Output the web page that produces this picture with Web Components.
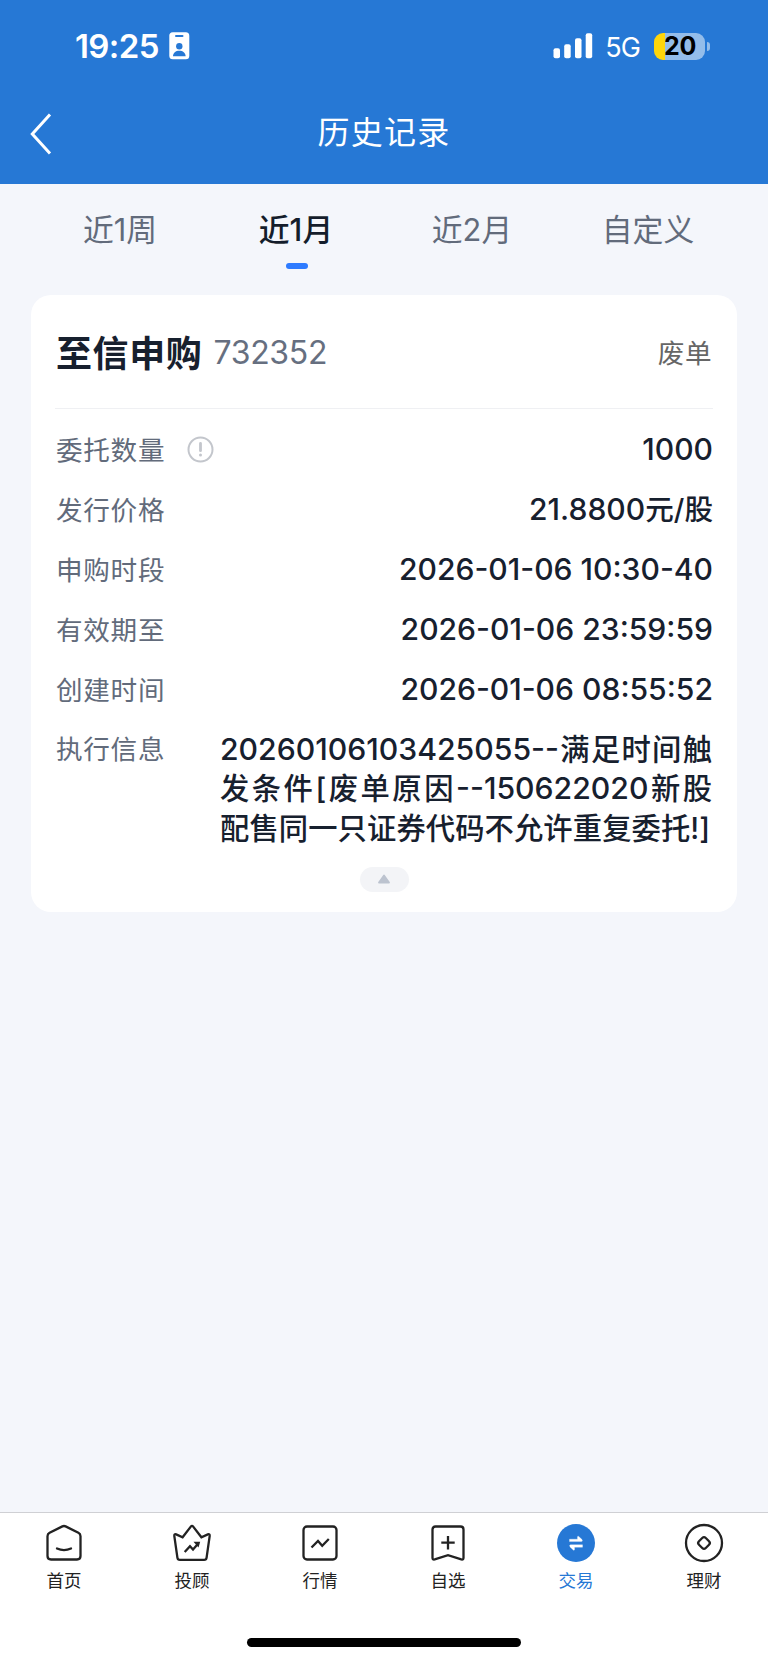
<!DOCTYPE html>
<html lang="zh-CN">
<head>
<meta charset="utf-8">
<meta name="viewport" content="width=device-width, initial-scale=1">
<title>历史记录</title>
<style>
  body {
    margin: 0;
    background: #f4f6fb;
    font-family: Inter, "Noto Sans CJK SC", sans-serif;
  }
</style>
</head>
<body>
<history-page></history-page>

<script>
function attach(el, markup) {
  const template = document.createElement('template');
  template.innerHTML = markup;
  el.attachShadow({mode: 'open'}).appendChild(template.content.cloneNode(true));
}

class StatusBar extends HTMLElement {
  constructor() {
    super();
    attach(this, `
      <style>
        :host {
          display: flex;
          align-items: center;
          height: 92px;
          box-sizing: border-box;
          padding: 0 58px 0 75px;
          color: #fff;
        }
        .time { font-size: 33px; font-weight: 600; letter-spacing: -0.6px; }
        .badge { margin-left: 10px; }
        .signal { margin-left: auto; }
        .network { margin: 2px 0 0 12px; font-size: 27px; letter-spacing: -0.9px; }
        .battery {
          display: flex;
          align-items: center;
          justify-content: center;
          box-sizing: border-box;
          width: 51px;
          height: 27px;
          margin-left: 14px;
          padding-left: 1px;
          border-radius: 9px;
          background: linear-gradient(90deg, #ffd60a 10.5px, #94bdea 10.5px);
          color: #000;
          font-size: 25px;
          font-weight: 700;
          letter-spacing: -0.3px;
        }
        .nub { width: 3px; height: 9px; margin-left: 2px; border-radius: 0 5px 5px 0; background: #94bdea; }
        svg { display: block; }
      </style>
      <span class="time">19:25</span>
      <svg class="badge" width="21" height="28" viewBox="0 0 21 28">
        <rect x="0.3" y="0.3" width="20" height="27" rx="3.5" fill="#fff"/>
        <rect x="6" y="3" width="8.5" height="2" rx="1" fill="#2678d5"/>
        <circle cx="10.3" cy="14.3" r="3.2" fill="#2678d5"/>
        <path d="M4 24.3c0-3.6 2.8-5.6 6.3-5.6s6.3 2 6.3 5.6z" fill="#2678d5"/>
      </svg>
      <svg class="signal" width="40" height="26" viewBox="0 0 40 26" fill="#fff">
        <rect x="0.5" y="15.3" width="6.5" height="10" rx="2"/>
        <rect x="11.2" y="11.3" width="6.5" height="14" rx="2"/>
        <rect x="22" y="5.3" width="6.5" height="20" rx="2"/>
        <rect x="32.7" y="0.3" width="6.5" height="25" rx="2"/>
      </svg>
      <span class="network">5G</span>
      <span class="battery">20</span>
      <span class="nub"></span>
    `);
  }
}
customElements.define('status-bar', StatusBar);

class NavBar extends HTMLElement {
  constructor() {
    super();
    attach(this, `
      <style>
        :host {
          display: grid;
          grid-template-columns: 80px 1fr 80px;
          align-items: center;
          height: 92px;
          color: #fff;
        }
        svg { display: block; margin: -9px 0 0 30px; }
        .title { text-align: center; font-size: 32px; letter-spacing: 1.3px; line-height: 48px; margin-top: -10px; }
      </style>
      <svg width="22" height="42" viewBox="0 0 22 42" fill="none" stroke="#fff" stroke-width="3">
        <path d="M20 1.5 2.3 21 20 40.5"/>
      </svg>
      <div class="title"><slot></slot></div>
    `);
  }
}
customElements.define('nav-bar', NavBar);

class RangeTab extends HTMLElement {
  constructor() {
    super();
    attach(this, `
      <style>
        :host {
          flex: 1;
          display: flex;
          flex-direction: column;
          align-items: center;
          color: #626b7b;
          font-size: 30.8px;
          line-height: 44px;
        }
        :host([active]) { color: #141d2b; font-weight: 500; }
        .mark { width: 22px; height: 6px; margin: 11px 0 0 2px; border-radius: 3px; }
        :host([active]) .mark { background: #2e7bff; }
      </style>
      <span><slot></slot></span>
      <span class="mark"></span>
    `);
  }
}
customElements.define('range-tab', RangeTab);

class OrderCard extends HTMLElement {
  constructor() {
    super();
    attach(this, `
      <style>
        :host {
          display: block;
          box-sizing: border-box;
          height: 617px;
          margin: 0 31px;
          padding: 0 24px;
          border-radius: 20px;
          background: #fff;
        }
        header {
          display: flex;
          align-items: center;
          box-sizing: border-box;
          height: 114px;
          padding: 0 1px;
          border-bottom: 1px solid #eff0f3;
        }
        .name { margin-top: -2px; color: #17202e; font-size: 36px; font-weight: 700; letter-spacing: 0.6px; }
        .code { margin: 2px 0 0 11px; color: #666f80; font-size: 32px; letter-spacing: -0.3px; }
        .status { margin-left: auto; color: #666; font-size: 26.6px; letter-spacing: 0.5px; }
        .rows { padding: 10.5px 0 0 1px; }
        .fold {
          display: flex;
          align-items: center;
          justify-content: center;
          width: 49px;
          height: 25px;
          margin: 18px auto 0;
          border-radius: 13px;
          background: #f3f4f7;
        }
      </style>
      <header>
        <span class="name"><slot name="name"></slot></span>
        <span class="code"><slot name="code"></slot></span>
        <span class="status"><slot name="status"></slot></span>
      </header>
      <div class="rows"><slot></slot></div>
      <div class="fold">
        <svg width="14" height="10" viewBox="0 0 14 10"><path d="M7 1.5 12 8.5H2z" fill="#bcc3cf" stroke="#bcc3cf" stroke-width="1.8" stroke-linejoin="round"/></svg>
      </div>
    `);
  }
}
customElements.define('order-card', OrderCard);

class OrderRow extends HTMLElement {
  constructor() {
    super();
    attach(this, `
      <style>
        :host {
          display: flex;
          align-items: flex-start;
          min-height: 60px;
        }
        .label {
          flex: none;
          color: #626b7b;
          font-size: 26.6px;
          letter-spacing: 0.7px;
          line-height: 60px;
        }
        .info { display: none; margin: 16px 0 0 22px; }
        :host([info]) .info { display: block; }
        .value {
          margin-left: auto;
          color: #17202e;
          font-size: 30.1px;
          font-weight: 500;
          line-height: 59px;
        }
        :host([long]) .label { line-height: 58px; }
        :host([long]) .value {
          width: 492px;
          margin-right: 1px;
          padding-top: 10px;
          font-size: 29.3px;
          line-height: 39.7px;
        }
      </style>
      <span class="label"></span>
      <svg class="info" width="27" height="27" viewBox="0 0 27 27" fill="none" stroke="#c3c6cc">
        <circle cx="13.5" cy="13.5" r="12" stroke-width="2"/>
        <path d="M13.5 7.5v7.2" stroke-width="2.8" stroke-linecap="round"/>
        <circle cx="13.5" cy="19" r="1.5" fill="#c3c6cc" stroke="none"/>
      </svg>
      <span class="value"><slot></slot></span>
    `);
  }

  connectedCallback() {
    this.shadowRoot.querySelector('.label').textContent = this.getAttribute('label');
  }
}
customElements.define('order-row', OrderRow);

const icons = {
  home: '<path d="M17.4 2.4q1.6-.8 3.2 0L33.4 8.8q2.1 1.1 2.1 3.5V32q0 3.5-3.5 3.5H6Q2.5 35.5 2.5 32V12.3q0-2.4 2.1-3.5z"/><path d="M12 24.5q7 3.2 14 0" stroke-linecap="round"/>',
  crown: '<path d="M17.8 2.6q1.2-1.6 2.4 0L28.4 13.3 34.8 10.4q2.1-.6 1.9 1.5L33.6 33.6q-.3 2.2-2.5 2.2H6.9q-2.2 0-2.5-2.2L1.3 11.9q-.2-2.1 1.9-1.5L9.6 13.3z"/><path d="M11.7 28 17 22.3 20 25.5 25 19.8"/><path d="M20.500 17.800H27.200L25.500 23.500z" fill="#222" stroke="none"/>',
  chart: '<rect x="2.5" y="2.5" width="33" height="33" rx="3.5"/><path d="M10.5 23.5 17 17 21.2 21.7 27.8 15"/>',
  star: '<path d="M6.5 2.5h25q3 0 3 3v28.2q0 2.3-2.2 1.7L19 31.2 5.7 35.4q-2.2.6-2.2-1.7V5.5q0-3 3-3z"/><path d="M19 12v13.5M12.3 18.7h13.4"/>',
  trade: '<circle cx="19" cy="19" r="19" fill="#2678d5" stroke="none"/><path d="M12.500 15.200H20.500V13q0-1.200 1.200-.6L25 15.500Q26 17.600 24.500 17.600H12.500zM25.500 23.200H17.500V25.400q0 1.200-1.200.6L13 22.900Q12 20.800 13.500 20.800H25.500z" fill="#fff" stroke="#fff" stroke-width=".3"/>',
  wealth: '<circle cx="19" cy="19" r="18"/><rect x="14.2" y="14.2" width="9.6" height="9.6" rx="2.5" transform="rotate(45 19 19)"/>'
};

class TabItem extends HTMLElement {
  constructor() {
    super();
    attach(this, `
      <style>
        :host {
          flex: 1;
          display: flex;
          flex-direction: column;
          align-items: center;
          color: #222;
          font-size: 17.5px;
          line-height: 26px;
        }
        :host([active]) { color: #2678d5; }
        svg { display: block; margin: 11px 0 6px; overflow: visible; }
      </style>
      <svg width="38" height="38" viewBox="0 0 38 38" fill="none" stroke="#222" stroke-width="2.3"></svg>
      <span><slot></slot></span>
    `);
  }

  connectedCallback() {
    this.shadowRoot.querySelector('svg').innerHTML = icons[this.getAttribute('icon')];
  }
}
customElements.define('tab-item', TabItem);

class HistoryPage extends HTMLElement {
  constructor() {
    super();
    attach(this, `
      <style>
        :host {
          display: flex;
          flex-direction: column;
          height: 1662px;
        }
        .top { height: 184px; background: #2678d5; }
        .ranges { display: flex; box-sizing: border-box; height: 111px; padding: 24px 32px 0; }
        .line { display: block; height: 39.7px; text-align: justify; text-align-last: justify; }
        .line:last-child { text-align-last: left; letter-spacing: 0.1px; }
        .num { font-size: 30.2px; }
        .unit { font-size: 28.6px; }
        footer {
          display: flex;
          flex-direction: column;
          align-items: center;
          box-sizing: border-box;
          height: 150px;
          margin-top: auto;
          border-top: 1px solid #cfd0d4;
          background: #fff;
        }
        nav { display: flex; width: 100%; height: 125px; }
        .home-bar { width: 274px; height: 9px; border-radius: 5px; background: #000; }
      </style>
      <div class="top">
        <status-bar></status-bar>
        <nav-bar>历史记录</nav-bar>
      </div>
      <div class="ranges">
        <range-tab>近1周</range-tab>
        <range-tab active>近1月</range-tab>
        <range-tab>近2月</range-tab>
        <range-tab>自定义</range-tab>
      </div>
      <order-card>
        <span slot="name">至信申购</span>
        <span slot="code">732352</span>
        <span slot="status">废单</span>
        <order-row label="委托数量" info>1000</order-row>
        <order-row label="发行价格">21.8800<span class="unit">元/股</span></order-row>
        <order-row label="申购时段">2026-01-06 10:30-40</order-row>
        <order-row label="有效期至">2026-01-06 23:59:59</order-row>
        <order-row label="创建时间">2026-01-06 08:55:52</order-row>
        <order-row label="执行信息" long>
          <span class="line"><span class="num">20260106103425055--</span>满足时间触</span>
          <span class="line">发条件[废单原因<span class="num">--150622020</span>新股</span>
          <span class="line">配售同一只证券代码不允许重复委托!]</span>
        </order-row>
      </order-card>
      <footer>
        <nav>
          <tab-item icon="home">首页</tab-item>
          <tab-item icon="crown">投顾</tab-item>
          <tab-item icon="chart">行情</tab-item>
          <tab-item icon="star">自选</tab-item>
          <tab-item icon="trade" active>交易</tab-item>
          <tab-item icon="wealth">理财</tab-item>
        </nav>
        <div class="home-bar"></div>
      </footer>
    `);
  }
}
customElements.define('history-page', HistoryPage);
</script>
</body>
</html>
